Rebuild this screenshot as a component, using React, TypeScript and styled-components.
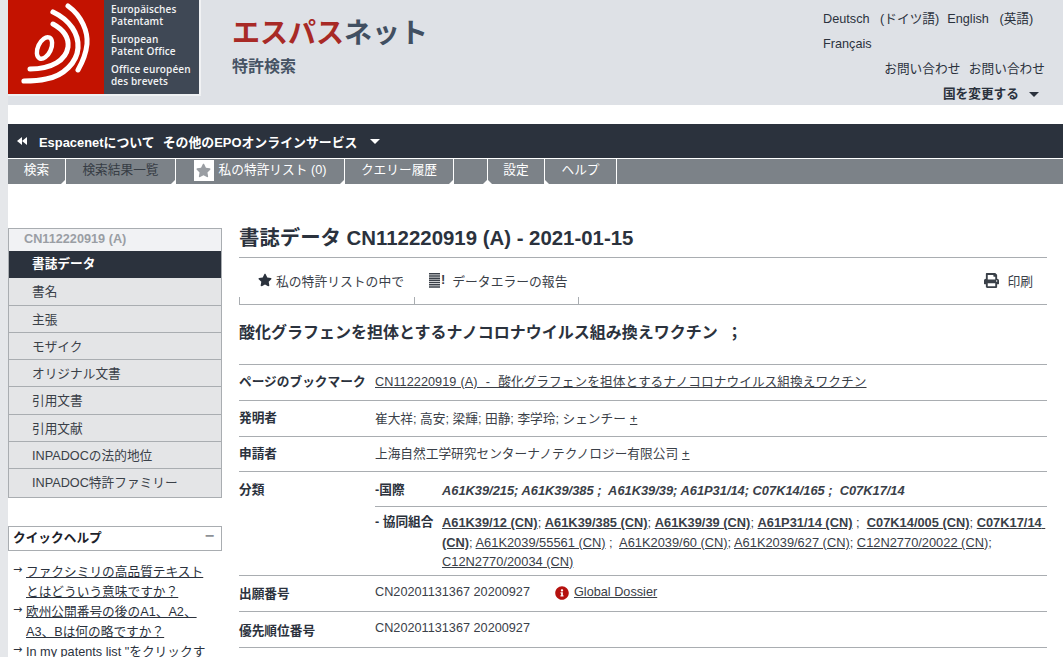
import styled, { createGlobalStyle } from "styled-components";
import { FaInfoCircle, FaPrint, FaStar } from "react-icons/fa";

const GlobalStyle = createGlobalStyle`
    html, body {
        margin: 0;
        height: 100%;
        overflow: hidden;
        background: #fff;
    }
    body {
        font-family: "Liberation Sans", "Noto Sans CJK JP", sans-serif;
        font-size: 12.7px;
        color: #2b323d;
    }
    a {
        color: inherit;
    }
`

const Shell = styled.div`
    height: 657px;
    overflow: hidden;
    border-left: 8px solid #e5e7ea;
`

const Header = styled.header`
    height: 105px;
    background: #dee1e6;
    display: flex;
`

const Logo = styled.div`
    width: 191px;
    height: 94px;
    display: flex;
    border-right: 2px solid #f1f2f4;
    box-shadow: 0 2px 0 #eef0f2;
`

const LogoMark = styled.svg`
    width: 96px;
    height: 94px;
    background: #c31200;
    display: block;
`

const LogoText = styled.div`
    width: 95px;
    background: #3f4855;
    color: #f2f3f4;
    font-family: "Open Sans", sans-serif;
    font-weight: 600;
    font-size: 10px;
    letter-spacing: 0.12px;
    line-height: 11.5px;
    padding: 4px 0 0 7px;
    box-sizing: border-box;
    white-space: nowrap;
    p {
        margin: 0 0 7px;
    }
`

const Brand = styled.div`
    margin-left: 31px;
    padding-top: 14px;
    flex: 1;
`

const BrandName = styled.div`
    font-size: 28px;
    line-height: 40px;
    font-weight: 700;
    color: #414f61;
    span {
        color: #a82a26;
    }
`

const BrandSub = styled.div`
    font-size: 16px;
    line-height: 22px;
    margin-top: 2px;
    font-weight: 700;
    color: #465364;
`

const HeaderRight = styled.div`
    width: 240px;
    padding-top: 7px;
    line-height: 25px;
    color: #2b323d;
`

const Languages = styled.div`
    width: 224px;
    display: flex;
    flex-wrap: wrap;
    column-gap: 8px;
    span {
        word-spacing: 7px;
    }
`

const Contact = styled.div`
    text-align: right;
    padding-right: 18px;
    word-spacing: 5px;
`

const Country = styled.div`
    display: flex;
    justify-content: flex-end;
    align-items: center;
    gap: 10px;
    padding-right: 24px;
    font-weight: 700;
`

const Caret = styled.i<{ $color?: string }>`
    display: block;
    width: 0;
    height: 0;
    border-left: 5px solid transparent;
    border-right: 5px solid transparent;
    border-top: 5px solid ${p => p.$color || "#2b323d"};
`

const DarkBar = styled.div`
    margin-top: 19px;
    height: 34px;
    background: #2b323d;
    color: #fff;
    font-weight: 700;
    font-size: 12.9px;
    display: flex;
    align-items: center;
    padding-left: 9px;
    svg {
        margin-right: 12px;
    }
    span {
        margin-right: 8px;
    }
    i {
        margin-left: 5px;
    }
`

const Tabs = styled.nav`
    margin-top: 1px;
    height: 25px;
    background: #7c8288;
    display: flex;
`

const Tab = styled.div<{ $width: number; $corner: "left" | "right"; $dim?: boolean }>`
    position: relative;
    width: ${p => p.$width}px;
    box-sizing: border-box;
    border-right: 1px solid #fff;
    color: ${p => (p.$dim ? "#363c44" : "#fff")};
    display: flex;
    justify-content: center;
    align-items: center;
    gap: 5px;
    padding-bottom: 6px;
    &::after {
        content: "";
        position: absolute;
        bottom: 0;
        ${p => p.$corner}: 0;
        width: 0;
        height: 0;
        border-bottom: 4px solid #fff;
        ${p => (p.$corner === "right" ? "border-left" : "border-right")}: 4px solid transparent;
    }
`

const StarBox = styled.span`
    width: 20px;
    height: 21px;
    margin-top: 4px;
    background: #fff;
    color: #9a9ea3;
    display: flex;
    align-items: center;
    justify-content: center;
    font-size: 15px;
`

const Main = styled.div`
    display: flex;
    padding-top: 44px;
    padding-right: 16px;
`

const Side = styled.aside`
    width: 214px;
    flex-shrink: 0;
    margin-right: 17px;
`

const SideMenu = styled.div`
    border: 1px solid #a9adb1;
    background: #e4e5e7;
`

const SideTitle = styled.div`
    height: 22px;
    line-height: 21px;
    padding-left: 15px;
    background: #f1f2f4;
    color: #9a9ea4;
    font-weight: 700;
`

const SideItem = styled.div<{ $active?: boolean }>`
    height: 27.3px;
    box-sizing: border-box;
    line-height: ${p => (p.$active ? 26 : 28)}px;
    padding-left: 23px;
    border-bottom: ${p => (p.$active ? "0" : "1px solid #a9adb1")};
    background: ${p => (p.$active ? "#2b323d" : "transparent")};
    color: ${p => (p.$active ? "#fff" : "#3a4048")};
    font-weight: ${p => (p.$active ? 700 : 400)};
    &:last-child {
        border-bottom: 0;
    }
`

const HelpBox = styled.div`
    margin-top: 28px;
    height: 25px;
    box-sizing: border-box;
    border: 1px solid #a9adb1;
    padding: 0 7px 3px 4px;
    display: flex;
    justify-content: space-between;
    align-items: center;
    font-weight: 700;
    color: #1d222a;
    span {
        color: #8d9196;
        font-size: 16px;
        line-height: 16px;
        margin-bottom: 2px;
    }
`

const HelpList = styled.ul`
    list-style: none;
    margin: 11px 0 0;
    padding: 0;
    line-height: 20px;
`

const HelpItem = styled.li`
    position: relative;
    padding-left: 18px;
    padding-right: 12px;
    &::before {
        content: "→";
        position: absolute;
        left: 5px;
        top: -2px;
        font-family: "DejaVu Sans", sans-serif;
        font-size: 11px;
    }
`

const Content = styled.main`
    flex: 1;
    min-width: 0;
`

const Title = styled.h1`
    margin: 0;
    font-size: 20.4px;
    line-height: 20px;
    height: 29px;
    font-weight: 700;
    color: #2b323d;
    border-bottom: 1px solid #a9adb1;
`

const Toolbar = styled.div`
    height: 46px;
    display: flex;
    border-bottom: 1px solid #a9adb1;
`

const ToolCell = styled.div<{ $width?: number }>`
    position: relative;
    box-sizing: border-box;
    width: ${p => (p.$width ? `${p.$width}px` : "auto")};
    flex: ${p => (p.$width ? "none" : 1)};
    display: flex;
    align-items: center;
    padding: 0 14px 2px 19px;
    gap: 4px;
    color: #3a4048;
    white-space: nowrap;
    font-size: 12.8px;
    svg {
        flex-shrink: 0;
    }
    &::before {
        content: "";
        position: absolute;
        left: 0;
        bottom: 0;
        height: 7px;
        border-left: 1px solid #a9adb1;
    }
`

const ToolRight = styled.span`
    margin-left: auto;
    display: flex;
    align-items: center;
    gap: 8px;
    svg {
        font-size: 15px;
        color: #3a4048;
    }
`

const BarsIcon = styled.span`
    display: flex;
    align-items: center;
    gap: 1px;
    margin-right: 3px;
    font-weight: 700;
    margin-left: -4px;
    b {
        line-height: 14px;
    }
`

const DocTitle = styled.h2`
    margin: 0;
    height: 60px;
    box-sizing: border-box;
    padding-top: 17px;
    font-size: 16px;
    line-height: 22px;
    font-weight: 700;
    color: #2b323d;
    white-space: pre;
    border-bottom: 1px solid #a9adb1;
`

const Row = styled.div<{ $height: number }>`
    height: ${p => p.$height}px;
    box-sizing: border-box;
    display: grid;
    grid-template-columns: 136px 1fr;
    border-bottom: 1px solid #a9adb1;
    padding-top: 9px;
    line-height: 17px;
`

const Label = styled.div<{ $drop?: number }>`
    font-weight: 700;
    color: #2b323d;
    padding-top: ${p => p.$drop || 0}px;
`

const Value = styled.div<{ $shift?: number }>`
    color: #3a4048;
    display: flex;
    align-items: flex-start;
    min-width: 0;
    white-space: pre;
    margin-top: ${p => p.$shift || 0}px;
`

const BookmarkLink = styled.a`
    word-spacing: 0.5px;
    letter-spacing: 0.05px;
`

const Plus = styled.a`
    margin-left: 4px;
    text-decoration: underline;
`

const Dossier = styled.span`
    display: flex;
    align-items: center;
    gap: 5px;
    margin-left: 25px;
    svg {
        color: #b5120f;
        font-size: 14px;
    }
`

const Classes = styled.div`
    display: flex;
    flex-direction: column;
`

const ClassRow = styled.div<{ $line?: boolean }>`
    display: grid;
    grid-template-columns: 67px 1fr;
    line-height: 19.3px;
    ${p => p.$line && "border-bottom: 1px solid #a9adb1; padding-bottom: 6px; margin-bottom: 6px;"}
    > span {
        color: #2b323d;
        font-weight: 700;
    }
`

const ClassCodes = styled.div<{ $italic?: boolean }>`
    font-size: 12.85px;
    font-weight: ${p => (p.$italic ? 700 : 400)};
    font-style: ${p => (p.$italic ? "italic" : "normal")};
    white-space: pre-wrap;
    color: #3a4048;
    a {
        font-weight: 400;
    }
    a.main {
        font-weight: 700;
    }
`

const tabs = [
    { label: "検索", width: 58, corner: "right" as const },
    { label: "検索結果一覧", width: 110, corner: "right" as const, dim: true },
    { label: "私の特許リスト (0)", width: 169, corner: "right" as const, star: true },
    { label: "クエリー履歴", width: 109, corner: "right" as const },
    { label: "", width: 34, corner: "right" as const },
    { label: "設定", width: 57, corner: "left" as const },
    { label: "ヘルプ", width: 72, corner: "left" as const },
]

const sideItems = ["書名", "主張", "モザイク", "オリジナル文書", "引用文書", "引用文献", "INPADOCの法的地位", "INPADOC特許ファミリー"]

const cpcMain = ["A61K39/12 (CN)", "A61K39/385 (CN)", "A61K39/39 (CN)", "A61P31/14 (CN)"]
const cpcMain2 = ["C07K14/005 (CN)", "C07K17/14 (CN)"]
const cpcOther = ["A61K2039/60 (CN)", "A61K2039/627 (CN)", "C12N2770/20022 (CN)", "C12N2770/20034 (CN)"]

export default function App() {
    return (
        <Shell>
            <GlobalStyle />
            <Header>
                <Logo>
                    <LogoMark viewBox="0 0 96 94" fill="none" stroke="#fff" strokeLinecap="round">
                        <ellipse cx="36.5" cy="48" rx="6.5" ry="11.5" transform="rotate(25 36.5 48)" strokeWidth="4.4" />
                        <path d="M45 24 C56 30 61 38 60 47 C58 60 44 69 22 69" strokeWidth="5" />
                        <path d="M45 12 C62 20 71 34 70 48 C69 62 56 76 38 79 C30 81 22 81 16 81" strokeWidth="5.2" />
                        <path d="M60 6 C74 16 80 32 79 44 C78 54 74 63 70 70" strokeWidth="5" />
                    </LogoMark>
                    <LogoText>
                        <p>Europäisches<br />Patentamt</p>
                        <p>European<br />Patent Office</p>
                        <p>Office européen<br />des brevets</p>
                    </LogoText>
                </Logo>
                <Brand>
                    <BrandName><span>エスパス</span>ネット</BrandName>
                    <BrandSub>特許検索</BrandSub>
                </Brand>
                <HeaderRight>
                    <Languages>
                        <span>Deutsch (ドイツ語)</span>
                        <span>English (英語)</span>
                        <span>Français</span>
                    </Languages>
                    <Contact>お問い合わせ お問い合わせ</Contact>
                    <Country>国を変更する <Caret /></Country>
                </HeaderRight>
            </Header>

            <DarkBar>
                <svg width="10" height="8" viewBox="0 0 10 8" fill="#fff">
                    <polygon points="5,0 5,8 0,4" />
                    <polygon points="10,0 10,8 5,4" />
                </svg>
                <span>Espacenetについて</span>
                <span>その他のEPOオンラインサービス</span>
                <Caret $color="#fff" />
            </DarkBar>
            <Tabs>
                {tabs.map(tab => (
                    <Tab key={tab.width} $width={tab.width} $corner={tab.corner} $dim={tab.dim}>
                        {tab.star && <StarBox><FaStar /></StarBox>}
                        {tab.label}
                    </Tab>
                ))}
            </Tabs>

            <Main>
                <Side>
                    <SideMenu>
                        <SideTitle>CN112220919 (A)</SideTitle>
                        <SideItem $active>書誌データ</SideItem>
                        {sideItems.map(item => <SideItem key={item}>{item}</SideItem>)}
                    </SideMenu>
                    <HelpBox>クイックヘルプ<span>−</span></HelpBox>
                    <HelpList>
                        <HelpItem><a href="#">ファクシミリの高品質テキストとはどういう意味ですか？</a></HelpItem>
                        <HelpItem><a href="#">欧州公開番号の後のA1、A2、A3、Bは何の略ですか？</a></HelpItem>
                        <HelpItem><a href="#">In my patents list "をクリックするとどうなりますか？</a></HelpItem>
                    </HelpList>
                </Side>

                <Content>
                    <Title>書誌データ CN112220919 (A) - 2021-01-15</Title>
                    <Toolbar>
                        <ToolCell $width={175}>
                            <FaStar size={14} color="#2b323d" />
                            私の特許リストの中で
                        </ToolCell>
                        <ToolCell $width={164}>
                            <BarsIcon>
                                <svg width="11" height="15" viewBox="0 0 11 15" fill="#3a4048">
                                    <path d="M0 0h11v1.5H0zM0 2.2h11v1.5H0zM0 4.4h11v1.5H0zM0 6.6h11v1.5H0zM0 8.8h11v1.5H0zM0 11h11v1.5H0zM0 13.2h11v1.5H0z" />
                                </svg>
                                <b>!</b>
                            </BarsIcon>
                            データエラーの報告
                        </ToolCell>
                        <ToolCell>
                            <ToolRight><FaPrint />印刷</ToolRight>
                        </ToolCell>
                    </Toolbar>
                    <DocTitle>{"酸化グラフェンを担体とするナノコロナウイルス組み換えワクチン  ；"}</DocTitle>

                    <Row $height={36}>
                        <Label>ページのブックマーク</Label>
                        <Value><BookmarkLink href="#">{"CN112220919 (A)  -  酸化グラフェンを担体とするナノコロナウイルス組換えワクチン"}</BookmarkLink></Value>
                    </Row>
                    <Row $height={36}>
                        <Label>発明者</Label>
                        <Value $shift={1}>崔大祥; 高安; 梁輝; 田静; 李学玲; シェンチー<Plus href="#">+</Plus></Value>
                    </Row>
                    <Row $height={35}>
                        <Label>申請者</Label>
                        <Value>上海自然工学研究センターナノテクノロジー有限公司<Plus href="#">+</Plus></Value>
                    </Row>
                    <Row $height={104}>
                        <Label $drop={1}>分類</Label>
                        <Classes>
                            <ClassRow $line>
                                <span>-国際</span>
                                <ClassCodes $italic>{"A61K39/215; A61K39/385 ;  A61K39/39; A61P31/14; C07K14/165 ;  C07K17/14"}</ClassCodes>
                            </ClassRow>
                            <ClassRow>
                                <span>- 協同組合</span>
                                <ClassCodes>
                                    {cpcMain.map((code, i) => (
                                        <span key={code}><a className="main" href="#">{code}</a>{i < 3 ? "; " : " ;  "}</span>
                                    ))}
                                    <a className="main" href="#">{cpcMain2[0]}</a>{"; "}
                                    <a className="main" href="#">{cpcMain2[1]}</a>{"; "}
                                    <a href="#">A61K2039/55561 (CN)</a>{" ;  "}
                                    {cpcOther.map(code => (
                                        <span key={code}><a href="#">{code}</a>{code.endsWith("20034 (CN)") ? "" : "; "}</span>
                                    ))}
                                </ClassCodes>
                            </ClassRow>
                        </Classes>
                    </Row>
                    <Row $height={36}>
                        <Label $drop={1}>出願番号</Label>
                        <Value $shift={-1}>
                            CN20201131367 20200927
                            <Dossier><FaInfoCircle /><a href="#">Global Dossier</a></Dossier>
                        </Value>
                    </Row>
                    <Row $height={36}>
                        <Label $drop={2}>優先順位番号</Label>
                        <Value $shift={-1}>CN20201131367 20200927</Value>
                    </Row>
                </Content>
            </Main>
        </Shell>
    )
}
